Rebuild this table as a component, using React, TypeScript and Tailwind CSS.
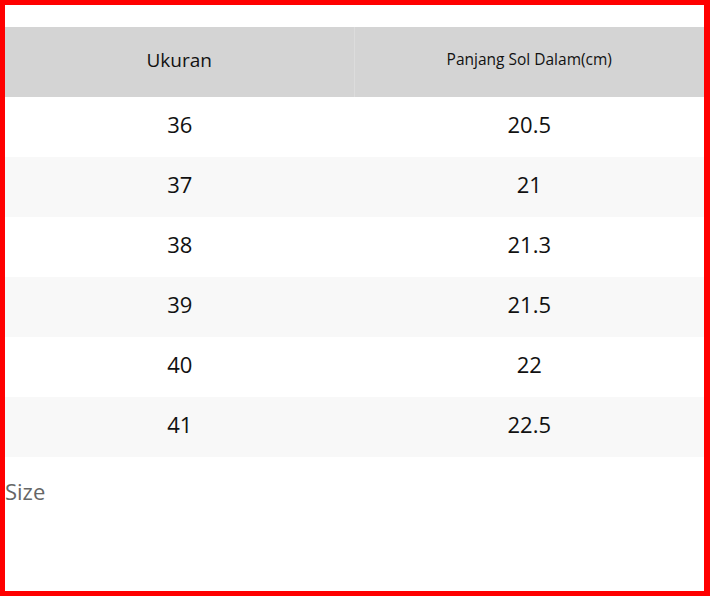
import React from "react";

const rows: [string, string][] = [
  ["36", "20.5"],
  ["37", "21"],
  ["38", "21.3"],
  ["39", "21.5"],
  ["40", "22"],
  ["41", "22.5"],
];

export default function App() {
  return (
    <div
      className="w-[710px] h-[596px] bg-white border-t-[5px] border-l-[5px] border-b-[5px] border-r-[6px] border-[#ff0000] pt-[22px]"
      style={{ fontFamily: '"Open Sans", sans-serif' }}
    >
      <div className="w-full">
        <div className="grid grid-cols-2 h-[70px] bg-[#d4d4d4]">
          <div className="flex items-center justify-center pb-[4px] text-[19px] text-[#111] border-r border-[#dcdcdc]">
            Ukuran
          </div>
          <div className="flex items-center justify-center pb-[4px] text-[15.5px] text-[#111]">
            Panjang Sol Dalam(cm)
          </div>
        </div>
        {rows.map(([a, b], i) => (
          <div
            key={a}
            className={
              "grid grid-cols-2 h-[60px] " + (i % 2 === 1 ? "bg-[#f8f8f8]" : "bg-white")
            }
          >
            <div className="flex items-center justify-center pb-[5px] text-[22px] text-[#111]">{a}</div>
            <div className="flex items-center justify-center pb-[5px] text-[22px] text-[#111]">{b}</div>
          </div>
        ))}
      </div>
      <div className="mt-[19px] text-[22px] leading-[30px] text-[#666]">Size</div>
    </div>
  );
}
